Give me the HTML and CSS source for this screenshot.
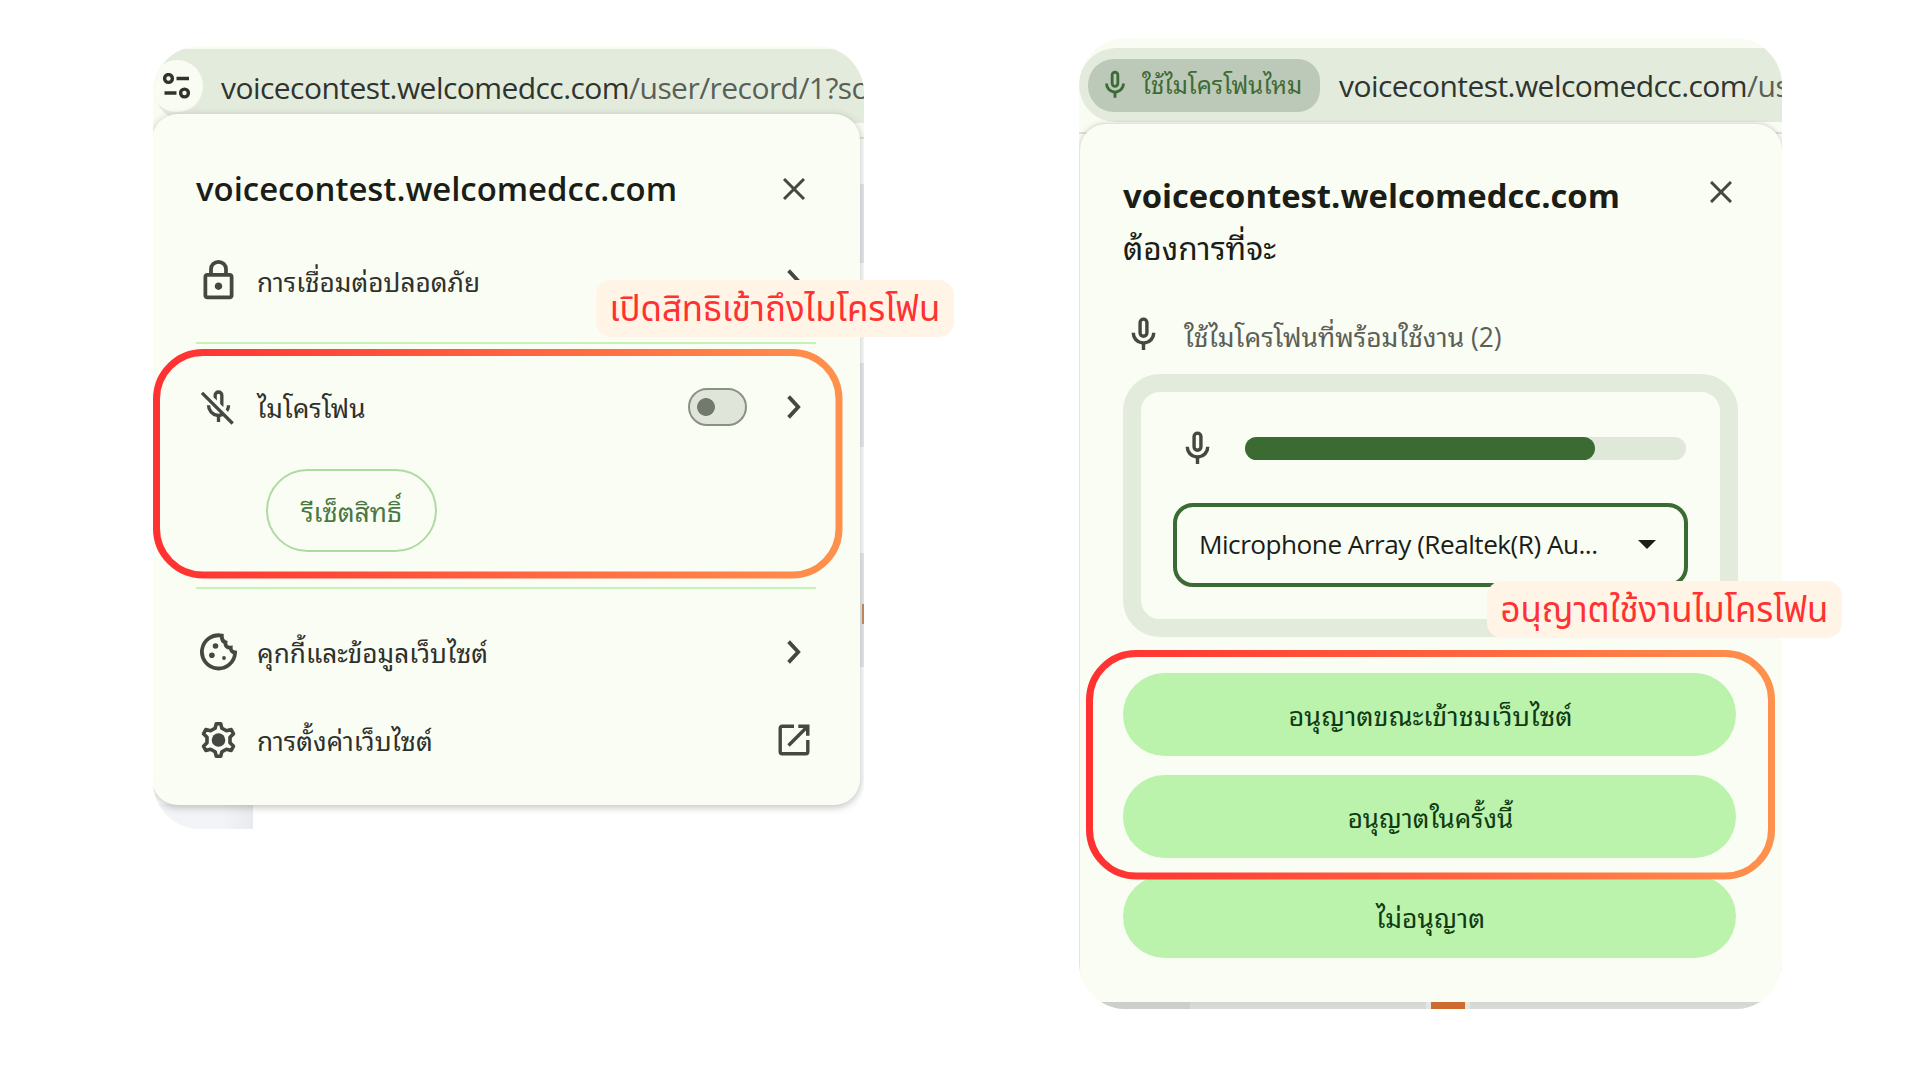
FILE: index.html
```html
<!DOCTYPE html>
<html lang="th">
<head>
<meta charset="utf-8">
<title>Microphone permission</title>
<link rel="stylesheet" href="styles.css">
</head>
<body>
<svg class="defs" width="0" height="0" aria-hidden="true">
  <defs>
    <linearGradient id="warm" x1="0" y1="0" x2="1" y2="0">
      <stop offset="0" stop-color="#ff3131"/>
      <stop offset="1" stop-color="#ff914d"/>
    </linearGradient>
    <symbol id="mic" viewBox="0 -960 960 960"><path d="M480-400q-50 0-85-35t-35-85v-240q0-50 35-85t85-35q50 0 85 35t35 85v240q0 50-35 85t-85 35Zm-40 280v-123q-104-14-172-93t-68-184h80q0 83 58.5 141.5T480-320q83 0 141.5-58.5T680-520h80q0 105-68 184t-172 93v123h-80Zm40-360q17 0 28.5-11.5T520-520v-240q0-17-11.5-28.5T480-800q-17 0-28.5 11.5T440-760v240q0 17 11.5 28.5T480-480Z"/></symbol>
    <symbol id="mic-off" viewBox="0 -960 960 960"><path d="m710-362-58-58q14-23 21-48t7-52h80q0 44-13 83.5T710-362Zm-118-120-72-72v-206q0-17-11.5-28.5T480-800q-17 0-28.5 11.5T440-760v126l-80-80v-46q0-50 35-85t85-35q50 0 85 35t35 85v240q0 11-2.5 20t-5.5 18ZM440-120v-123q-104-14-172-93t-68-184h80q0 83 57.5 141.5T480-320q34 0 64.5-10.5T600-360l57 57q-29 23-63.5 39T520-243v123h-80Zm352 64L56-792l56-56 736 736-56 56Z"/></symbol>
    <symbol id="lock" viewBox="0 -960 960 960"><path d="M240-80q-33 0-56.5-23.5T160-160v-400q0-33 23.5-56.5T240-640h40v-80q0-83 58.5-141.5T480-920q83 0 141.5 58.5T680-720v80h40q33 0 56.5 23.5T800-560v400q0 33-23.5 56.5T720-80H240Zm0-80h480v-400H240v400Zm240-120q33 0 56.5-23.5T560-360q0-33-23.5-56.5T480-440q-33 0-56.5 23.5T400-360q0 33 23.5 56.5T480-280ZM360-640h240v-80q0-50-35-85t-85-35q-50 0-85 35t-35 85v80Z"/></symbol>
    <symbol id="cookie" viewBox="0 0 38 38">
      <path fill="none" stroke="currentColor" stroke-width="3.8" d="M22.3 2.6A16.6 16.6 0 1 0 35.6 19.5C33 19.4 31 17.6 31.2 14.6C27.6 15 25.4 12.6 26 9.4C23.4 8.6 22 6.2 22.3 2.6Z"/>
      <circle cx="16" cy="13" r="2.8"/><circle cx="12.4" cy="22.3" r="2.8"/><circle cx="24.5" cy="25" r="1.9"/>
    </symbol>
    <symbol id="gear" viewBox="-19 -19 38 38">
      <path fill="none" stroke="currentColor" stroke-width="3.6" stroke-linejoin="round" d="M-2.2-16.3H2.2L3.4-11.8L8-9.2L12.7-10.4L15-6.2L11.5-2.8V2.8L15 6.2L12.7 10.4L8 9.2L3.4 11.8L2.2 16.3H-2.2L-3.4 11.8L-8 9.2L-12.7 10.4L-15 6.2L-11.5 2.8V-2.8L-15-6.2L-12.7-10.4L-8-9.2L-3.4-11.8Z"/>
      <circle r="6.8"/>
    </symbol>
    <symbol id="open" viewBox="0 0 32 32">
      <path fill="none" stroke="currentColor" stroke-width="3.4" d="M16 2.2H4.2a2 2 0 0 0-2 2V27.8a2 2 0 0 0 2 2H27.8a2 2 0 0 0 2-2V16M10.5 21.5L28 4"/>
      <path d="M20.3.5H31.5V11.7H28V6.5L25.5 4H20.3Z"/>
    </symbol>
    <symbol id="chevron" viewBox="0 0 14 24"><path fill="none" stroke="currentColor" stroke-width="3.8" d="M1.6 1.6L11.2 12L1.6 22.4"/></symbol>
    <symbol id="close" viewBox="0 0 22 22"><path fill="none" stroke="currentColor" stroke-width="3" d="M1 1L21 21M21 1L1 21"/></symbol>
    <symbol id="tune" viewBox="0 0 28 26">
      <g fill="none" stroke="currentColor" stroke-width="3.4"><circle cx="5.5" cy="5.5" r="3.9"/><path d="M13.5 5.5H26M1.5 20H13.5"/><circle cx="21.5" cy="20" r="3.9"/></g>
    </symbol>
  </defs>
</svg>

<main class="board">
  <figure class="figure figure-info">
    <div class="shot shot-info">
      <div class="bar">
        <span class="tune"><svg width="28" height="26"><use href="#tune"/></svg></span>
        <span class="url">voicecontest.welcomedcc.com<i>/user/record/1?sc</i></span>
      </div>
      <section class="popup">
        <header class="head"><h2>voicecontest.welcomedcc.com</h2><svg class="end" width="22" height="22"><use href="#close"/></svg></header>
        <div class="row first"><svg class="lead" width="45" height="45"><use href="#lock"/></svg><span>การเชื่อมต่อปลอดภัย</span><svg class="end" width="14" height="24"><use href="#chevron"/></svg></div>
        <hr>
        <div class="row mic-row"><svg class="lead" width="40" height="40"><use href="#mic-off"/></svg><span>ไมโครโฟน</span><b class="toggle"></b><svg class="end" width="14" height="24"><use href="#chevron"/></svg></div>
        <button class="reset">รีเซ็ตสิทธิ์</button>
        <hr>
        <div class="row cookies"><svg class="lead" width="38" height="38"><use href="#cookie"/></svg><span>คุกกี้และข้อมูลเว็บไซต์</span><svg class="end" width="14" height="24"><use href="#chevron"/></svg></div>
        <div class="row"><svg class="lead" width="38" height="38"><use href="#gear"/></svg><span>การตั้งค่าเว็บไซต์</span><svg class="end" width="32" height="32"><use href="#open"/></svg></div>
      </section>
    </div>
    <svg class="ring" width="690" height="230"><rect x="3.5" y="3.5" width="682.5" height="222.5" rx="46.5"/></svg>
    <figcaption class="tag">เปิดสิทธิเข้าถึงไมโครโฟน</figcaption>
  </figure>

  <figure class="figure figure-ask">
    <div class="shot shot-ask">
      <div class="bar">
        <span class="chip"><svg width="34" height="34"><use href="#mic"/></svg><span>ใช้ไมโครโฟนไหม</span></span>
        <span class="url">voicecontest.welcomedcc.com<i>/us</i></span>
      </div>
      <section class="popup">
        <header class="head"><h2>voicecontest.welcomedcc.com</h2><svg class="end" width="22" height="22"><use href="#close"/></svg></header>
        <p class="wants">ต้องการที่จะ</p>
        <p class="device"><svg width="41" height="41"><use href="#mic"/></svg><span>ใช้ไมโครโฟนที่พร้อมใช้งาน (2)</span></p>
        <div class="panel">
          <div class="level"><svg width="41" height="41"><use href="#mic"/></svg><div class="track"><div class="fill" style="width:79.4%"></div></div></div>
          <div class="select"><span>Microphone Array (Realtek(R) Au...</span><svg width="18" height="9" viewBox="0 0 18 9"><path d="M0 0H18L9 9Z"/></svg></div>
        </div>
        <div class="actions">
          <button class="visit">อนุญาตขณะเข้าชมเว็บไซต์</button>
          <button class="once">อนุญาตในครั้งนี้</button>
          <button>ไม่อนุญาต</button>
        </div>
      </section>
      <div class="under"><i></i><i></i><i></i><i></i></div>
    </div>
    <svg class="ring" width="690" height="230"><rect x="3.5" y="3.5" width="682" height="222.5" rx="46.5"/></svg>
    <figcaption class="tag">อนุญาตใช้งานไมโครโฟน</figcaption>
  </figure>
</main>
</body>
</html>
```
FILE: styles.css
```css
* { box-sizing: border-box; margin: 0; }

body {
  background: #fff;
  font-family: "Open Sans", "Noto Sans Thai Looped", "Noto Sans", sans-serif;
  color: #30332c;
}

.defs { position: absolute; }
svg { display: block; flex: none; fill: currentColor; }

.board {
  display: flex;
  align-items: flex-start;
  gap: 215px;
  width: 1920px;
  height: 1080px;
  padding: 38px 0 0 153px;
  overflow: hidden;
}

.figure { position: relative; }
.figure-info { margin-top: 8px; }

.shot { display: flex; flex-direction: column; overflow: hidden; border-radius: 47px; }
.shot-info {
  width: 711px;
  height: 783px;
  background:
    linear-gradient(#c98a5c, #c98a5c) 100% 558px / 2px 20px no-repeat,
    linear-gradient(transparent 138px, #e8eaf0 138px 217px, transparent 217px 317px, #ebecf1 317px 401px, transparent 401px 507px, #eaebf0 507px 621px, transparent 621px) 100% 0 / 4px 783px no-repeat,
    linear-gradient(90deg, #f3f4f7 70px, #e9eaee) 0 758px / 100px 25px no-repeat,
    linear-gradient(#f9fcf2 91px, #dfe2da 91px 93px, #fff 93px);
}
.shot-ask {
  width: 703px;
  height: 971px;
  background: linear-gradient(#f9fcf2 94px, #dfe2da 94px 96px, #fafdf4 96px);
}

.bar { display: flex; align-items: center; flex: none; height: 74px; background: #e3ecdc; }
.shot-info .bar { margin-top: 3px; border-bottom-left-radius: 37px; }
.shot-ask .bar { margin-top: 10px; padding-left: 9px; border-radius: 37px 0 0 37px; }

.tune {
  display: flex;
  align-items: center;
  justify-content: center;
  flex: none;
  width: 52px;
  height: 52px;
  margin-left: -2px;
  border-radius: 50%;
  background: #f9fcf2;
  color: #30332c;
}

.url { font-size: 30px; letter-spacing: -0.55px; line-height: 40px; white-space: nowrap; color: #30342e; }
.url i { font-style: normal; color: #5a5f57; }
.shot-info .url { margin: 4px 0 0 18px; }

.popup { display: flex; flex-direction: column; position: relative; flex: none; background: #fafdf4; color: #454840; }
.shot-info .popup {
  width: 708px;
  height: 691px;
  margin: -9px 0 0 -1px;
  padding: 45px 45px 0 44px;
  border-radius: 26px;
  box-shadow: 0 2px 7px 1px rgba(60, 66, 56, .28);
}

.head { display: flex; align-items: center; justify-content: space-between; height: 60px; }
h2 { color: #1b1d17; font-size: 32.9px; font-weight: 600; line-height: 44px; }
.head .end { margin-right: 10px; }

.row { display: flex; align-items: center; height: 88px; }
.row span { flex: 1; padding-top: 2px; font-size: 26.2px; line-height: 40px; color: #2e312b; }
.row .lead { width: 45px; margin: -1px 16px 0 0; }
.row .end { margin: -1px 14px 0 0; }
.row:last-child .end { margin-right: 5px; }
.first { margin-top: 18px; }

hr { flex: none; width: 620px; height: 2px; border: 0; background: #c6f2b8; }
.first + hr { margin-top: 17px; }
.reset + hr { margin-top: 35px; }
.mic-row { margin-top: 19px; }
.cookies { margin-top: 19px; }

.toggle {
  width: 59px;
  height: 38px;
  margin-right: 40px;
  border: 2.5px solid #8b9285;
  border-radius: 19px;
  background: radial-gradient(circle at 16px 50%, #72796d 8.5px, #dfe5d9 9.3px);
}

button { font-family: inherit; font-size: 26.4px; line-height: 36px; }
.reset {
  width: 171px;
  height: 83px;
  margin: 18px 0 0 70px;
  padding: 2px 0 0;
  border: 2px solid #addca0;
  border-radius: 42px;
  background: none;
  color: #4a7842;
}

.chip {
  display: flex;
  align-items: center;
  flex: none;
  gap: 10px;
  width: 232px;
  height: 53px;
  padding-left: 10px;
  border-radius: 26px 22px 22px 26px;
  background: #bcc8b8;
  color: #3c6b35;
  font-size: 23.9px;
  white-space: nowrap;
}
.chip span { padding-bottom: 4px; }
.shot-ask .url { margin: 2px 0 0 19px; }

.shot-ask .popup {
  width: 702px;
  height: 878px;
  margin: 2px 0 0 1px;
  padding: 42px 44px 0 43px;
  border-radius: 26px 26px 0 0;
  box-shadow: 0 0 5px rgba(60, 66, 56, .3);
}
.shot-ask h2 { font-size: 32.8px; font-weight: 700; }
.shot-ask .head .end { margin: -9px 6px 0 0; }
.wants { height: 48px; margin-top: -2px; font-size: 31.7px; line-height: 48px; color: #1b1d17; }
.device { display: flex; align-items: center; gap: 20px; height: 46px; margin-top: 39px; font-size: 26.4px; color: #5b6056; }
.device svg { color: #454840; }
.device span { padding-top: 2px; white-space: nowrap; }

.panel {
  width: 615px;
  height: 263px;
  margin-top: 17px;
  padding: 32px;
  border: 18px solid #e3ecdc;
  border-radius: 37px;
}
.level { display: flex; align-items: center; gap: 27px; height: 46px; margin: 1px 0 0 4px; }
.track { width: 441px; height: 23px; border-radius: 12px; background: #e0e8da; }
.fill { height: 100%; border-radius: 12px; background: #3b6a33; }
.select {
  display: flex;
  align-items: center;
  justify-content: space-between;
  width: 515px;
  height: 84px;
  margin: 32px 0 0 0;
  padding: 0 28px 2px 22px;
  border: 4.5px solid #3b6a33;
  border-radius: 20px;
  color: #1b1d17;
}
.select span { font-size: 26.2px; letter-spacing: -0.52px; white-space: nowrap; }

.actions { display: flex; flex-direction: column; gap: 19px; margin-top: 36px; }
.actions button {
  width: 613px;
  height: 83px;
  padding: 2px 0 0 2px;
  border: 0;
  border-radius: 42px;
  background: #bbf2ac;
  color: #0f3a12;
}
.actions .visit { font-size: 27.1px; }
.actions .once { font-size: 26px; }
.actions button:last-child { margin-top: -2px; }

.under { display: flex; position: relative; flex: 1; gap: 5px; background: #e4e6e2; }
.under i { background: linear-gradient(#d4d6d2, #d9dbd8); }
.under i:nth-child(1) { width: 111px; background: #cccfcc; margin-right: -5px; }
.under i:nth-child(2) { width: 236px; }
.under i:nth-child(3) { width: 34px; background: #cd6a30; }
.under i:nth-child(4) { flex: 1; }

.ring { position: absolute; fill: none; stroke: url(#warm); stroke-width: 7px; }
.figure-info .ring { left: 0; top: 303px; }
.figure-ask .ring { left: 7px; top: 612px; }

.tag {
  position: absolute;
  height: 57px;
  border-radius: 15px;
  background: #fff4e6;
  color: #ff3131;
  font: 34.8px/61px "Noto Sans Thai", "Noto Sans", sans-serif;
  text-align: center;
  white-space: nowrap;
}
.figure-info .tag { left: 443px; top: 234px; width: 358px; }
.figure-ask .tag { left: 408px; top: 543px; width: 355px; }
```
